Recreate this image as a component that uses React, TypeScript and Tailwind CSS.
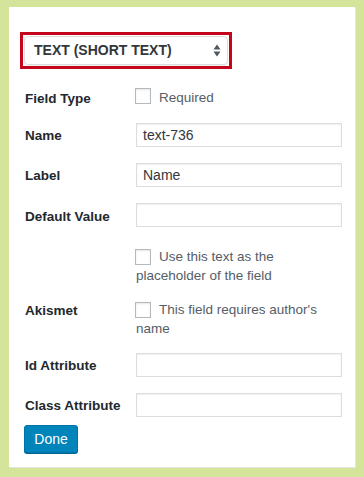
import React from 'react';

const font = { fontFamily: '"Liberation Sans", Arial, sans-serif' };

export default function App() {
  return (
    <div className="w-[364px] h-[477px] bg-[#d4e49a] pt-[7px] pl-[9px]" style={font}>
      <div className="w-[346px] h-[460px] bg-white shadow-[1px_1px_0_#e2e6dc] flex flex-col">
        {/* Field type select */}
        <div className="mt-[25px] ml-[11px] w-[212px] h-[37px] border-[3px] border-[#c5051c] p-px">
          <div className="h-[29px] w-[204px] rounded-[4px] border border-[#dcdcde] shadow-[0_1px_1px_rgba(0,0,0,0.06)] flex items-center justify-between pl-[9px] pr-[6px]">
            <span className="text-[14px] font-bold text-[#32373c]">TEXT (SHORT TEXT)</span>
            <svg width="8" height="13" viewBox="0 0 8 13">
              <path d="M4 0.5 L7.5 5.5 L0.5 5.5 Z" fill="#50575e" />
              <path d="M4 12.5 L7.5 7.5 L0.5 7.5 Z" fill="#50575e" />
            </svg>
          </div>
        </div>

        <div className="pl-4 flex flex-col">
          <Row label="Field Type" h="h-[35px]" mt="mt-[19px]" labelPt="pt-[1px]">
            <div className="flex items-start">
              <Checkbox />
              <span className="ml-2 text-[13.5px] leading-[19px] text-[#555d66]">Required</span>
            </div>
          </Row>
          <Row label="Name" h="h-[40px]" labelPt="pt-[3px]">
            <Input value="text-736" />
          </Row>
          <Row label="Label" h="h-[40px]" labelPt="pt-[3px]">
            <Input value="Name" />
          </Row>
          <Row label="Default Value" h="h-[45px]" labelPt="pt-[4px]">
            <Input value="" />
          </Row>
          <Row label="" h="h-[53px]">
            <CheckText text="Use this text as the placeholder of the field" />
          </Row>
          <Row label="Akismet" h="h-[52px]" labelPt="pt-0">
            <CheckText text="This field requires author's name" />
          </Row>
          <Row label="Id Attribute" h="h-[40px]" labelPt="pt-[3px]">
            <Input value="" />
          </Row>
          <Row label="Class Attribute" h="h-[32px]" labelPt="pt-[3px]">
            <Input value="" />
          </Row>
          <div>
            <button className="-ml-px h-[28px] w-[54px] rounded-[3px] bg-[#0085ba] border border-[#0073aa] shadow-[0_1px_0_#006799] text-white text-[14px] flex items-center justify-center">
              Done
            </button>
          </div>
        </div>
      </div>
    </div>
  );
}

interface RowProps {
  label: string;
  h: string;
  mt?: string;
  labelPt?: string;
  children: React.ReactNode;
}

function Row({ label, h, mt, labelPt, children }: RowProps) {
  return (
    <div className={`flex ${h} ${mt ?? ''}`}>
      <div className={`w-[111px] shrink-0 text-[13.5px] font-bold leading-[19px] text-[#23282d] ${labelPt ?? ''}`}>
        {label}
      </div>
      <div className="w-[206px]">{children}</div>
    </div>
  );
}

function Input({ value }: { value: string }) {
  return (
    <div className="h-[24px] w-[206px] border border-[#dddddd] shadow-[inset_0_1px_2px_rgba(0,0,0,0.07)] px-[6px] flex items-center text-[14px] text-[#32373c]">
      {value}
    </div>
  );
}

function Checkbox() {
  return (
    <span className="-ml-px inline-block w-4 h-4 border border-[#b4b9be] bg-white shadow-[inset_0_1px_2px_rgba(0,0,0,0.1)]" />
  );
}

function CheckText({ text }: { text: string }) {
  return (
    <p className="text-[13.5px] leading-[19px] text-[#555d66] -mt-[1px]">
      <span className="-ml-px inline-block w-4 h-4 mr-2 align-[-4px] border border-[#b4b9be] bg-white shadow-[inset_0_1px_2px_rgba(0,0,0,0.1)]" />
      {text}
    </p>
  );
}
